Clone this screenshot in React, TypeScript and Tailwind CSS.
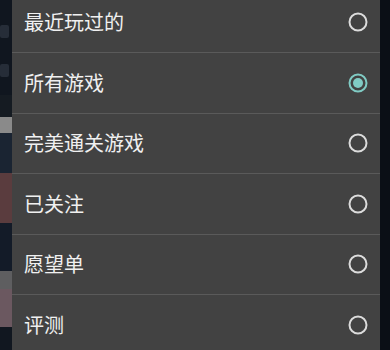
import React from "react";

const items = [
  { label: "最近玩过的", checked: false },
  { label: "所有游戏", checked: true },
  { label: "完美通关游戏", checked: false },
  { label: "已关注", checked: false },
  { label: "愿望单", checked: false },
  { label: "评测", checked: false },
];

function Radio({ checked }: { checked: boolean }) {
  return (
    <svg width="22" height="22" viewBox="0 0 22 22">
      <circle
        cx="11"
        cy="11"
        r="8.5"
        fill="none"
        stroke={checked ? "#80cbc4" : "#dcdcdc"}
        strokeWidth="2"
      />
      {checked && <circle cx="11" cy="11" r="5" fill="#80cbc4" />}
    </svg>
  );
}

export default function App() {
  return (
    <div
      className="w-[390px] h-[350px] overflow-hidden flex bg-[#0c1018]"
      style={{ fontFamily: '"Noto Sans CJK SC", "Noto Sans", sans-serif' }}
    >
      {/* dimmed page behind the dialog */}
      <div className="w-[12px] shrink-0 flex flex-col">
        <div className="h-[95px] bg-[#10161f] flex flex-col items-start pt-[25px] gap-[26px]">
          <div className="w-[9px] h-[13px] bg-[#262d38] rounded-[2px]" />
          <div className="w-[9px] h-[13px] bg-[#262d38] rounded-[2px]" />
        </div>
        <div className="h-[22px] bg-[#151b22]" />
        <div className="h-[16px] bg-[#8a8a8a]" />
        <div className="h-[40px] bg-[#1a2432]" />
        <div className="h-[50px] bg-[#5a3c3e]" />
        <div className="h-[48px] bg-[#131b28]" />
        <div className="h-[18px] bg-[#5e5e60]" />
        <div className="h-[38px] bg-[#6b5860]" />
        <div className="flex-1 bg-[#111720]" />
      </div>

      <div className="w-[368px] shrink-0 bg-[#424242]">
        <div className="-mt-[7.5px] flex flex-col">
          {items.map((item, i) =>
            i === 0 ? (
              <div
                key={item.label}
                className="h-[59.5px] flex items-center justify-between pl-[12px] pr-[11px]"
              >
                <span className="text-[20px] text-[#f0f0f0]">{item.label}</span>
                <Radio checked={item.checked} />
              </div>
            ) : (
              <div
                key={item.label}
                className="h-[60.5px] flex items-center justify-between pl-[12px] pr-[11px] border-t border-[#5a5a5a]"
              >
                <span className="text-[20px] text-[#f0f0f0]">{item.label}</span>
                <Radio checked={item.checked} />
              </div>
            )
          )}
        </div>
      </div>

      <div className="flex-1 bg-[#0b0f16]" />
    </div>
  );
}
